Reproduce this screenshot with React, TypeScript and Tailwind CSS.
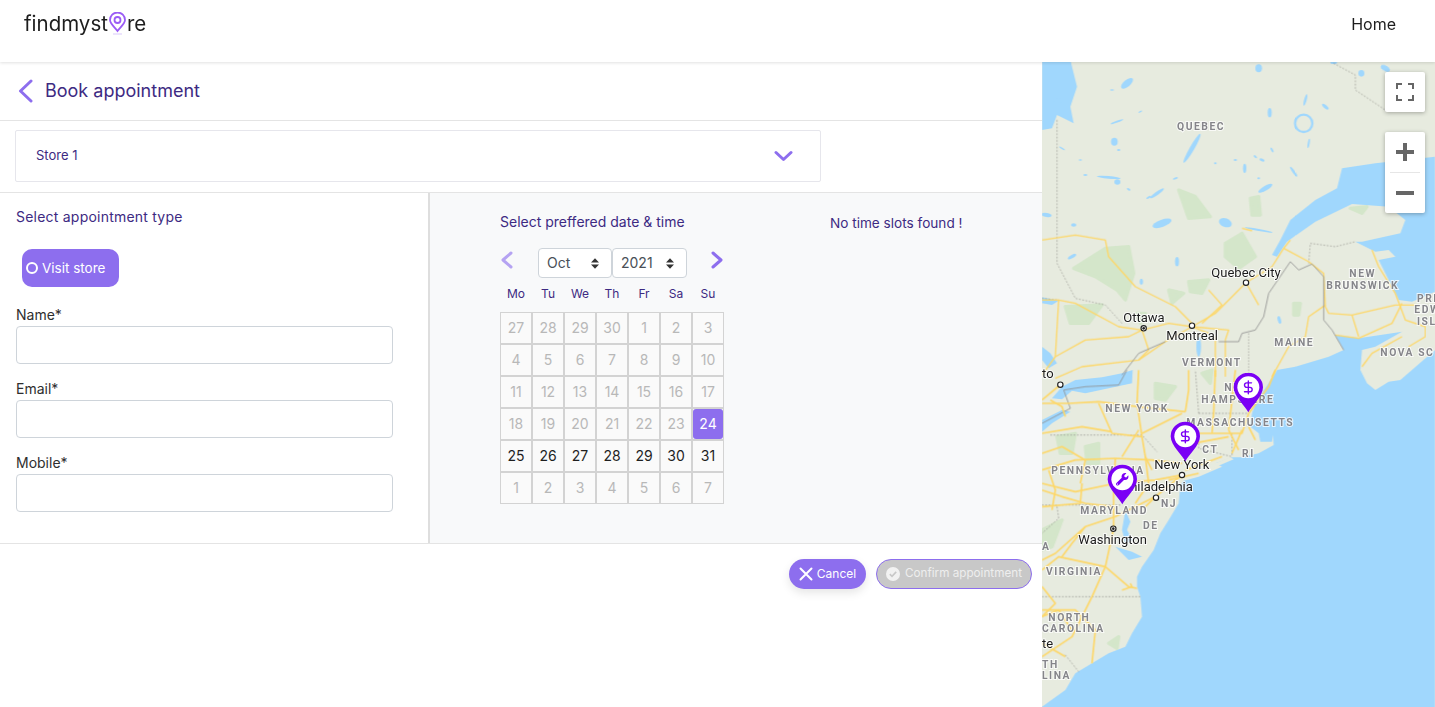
import React from "react";
import { DollarSign } from "lucide-react";
import { FaWrench } from "react-icons/fa";

const WATER = "#a0d7fd";
const LAND = "#e7ebdf";
const ROAD = "#fdd768";

const ocean =
  "M1179,-60 L1075,30 1040,35 1000,60 975,40 955,0 960,-60 1000,-70 1080,-115 950,-95 880,-105 905,-60 860,-40 760,-10 705,0 680,40 660,70 640,100 630,130 625,170 650,190 655,215 690,215 693,195 695,225 650,250 600,262 570,262 520,280 540,290 470,320 425,332 415,345 410,400 380,450 355,490 335,540 300,590 285,620 285,650 295,680 300,740 270,790 250,830 200,850 150,880 100,910 70,960 0,1010 L0,1012 L1179,1012 Z";
const gulf =
  "M1179,290 L1000,310 900,325 885,385 820,420 745,480 715,540 690,585 705,590 735,545 820,485 930,432 1040,440 1090,480 1075,520 960,545 940,545 1000,575 1040,570 1060,590 1010,600 1050,680 1070,720 1110,725 1179,695 Z";
const jamesBay = "M0,0 L85,0 105,80 85,140 95,190 45,165 30,205 0,210 Z";
const lakes: [number, number, number, number, number][] = [
  [450, 265, 50, 7, -60], [255, 70, 22, 10, -40], [650, 25, 10, 12, 0], [550, 488, 20, 13, 20],
  [650, 510, 42, 3, 10], [360, 490, 30, 11, -20], [670, 385, 24, 7, -30], [755, 335, 18, 4, 55],
  [608, 325, 5, 14, 0], [345, 400, 25, 5, -35], [200, 352, 36, 4, 5], [226, 366, 9, 8, 0],
  [217, 245, 10, 12, 0], [683, 158, 6, 14, 0], [850, 140, 12, 5, 40], [660, 300, 8, 4, 20],
  [14, 465, 15, 6, 10], [405, 605, 6, 14, 0], [90, 590, 14, 5, -30], [225, 185, 20, 3, -20],
  [48, 122, 12, 7, 0], [875, 8, 10, 4, 0], [958, 40, 9, 10, 0], [298, 665, 5, 9, 0],
  [712, 780, 5, 12, -15], [1030, 25, 15, 8, 30], [130, 345, 6, 3, 0], [260, 388, 6, 3, 30],
  [580, 300, 5, 3, 0], [295, 155, 6, 2, -30], [640, 290, 6, 3, 40], [230, 270, 5, 3, 0],
  [400, 355, 8, 3, -20], [320, 412, 8, 3, -30], [60, 265, 10, 2, 30], [115, 300, 5, 2, 0],
  [210, 90, 6, 2, 0], [790, 120, 4, 18, 15], [650, 355, 4, 3, 0], [690, 270, 8, 3, 60],
  [800, 250, 3, 14, 10], [520, 310, 4, 3, 0], [95, 495, 8, 5, 0], [470, 860, 7, 30, 0],
];
const greens6 = [
  "M410,390 L460,410 505,470 440,475 Z",
  "M625,415 L650,410 655,465 630,465 Z",
  "M550,550 L600,520 640,590 590,625 550,590 Z",
  "M95,625 L190,565 260,560 275,640 250,720 225,690 160,650 Z",
  "M70,740 L180,735 140,790 85,790 Z",
  "M440,665 L500,660 480,700 445,695 Z",
  "M380,690 L425,700 390,730 Z",
  "M755,730 L775,730 770,765 755,765 Z",
  "M925,445 L975,440 960,460 Z",
  "M285,760 L310,760 295,790 Z",
];
const greens7 = [
  "M340,40 L400,50 370,90 340,85 Z",
  "M45,200 L100,190 90,250 55,250 Z",
  "M130,230 L170,220 170,280 135,280 Z",
  "M480,10 L510,0 505,40 Z",
  "M0,480 L60,450 30,530 0,540 Z",
  "M200,820 L230,800 225,835 Z",
];
const roads6 = [
  "M725,565 L800,605 845,640 850,740 860,760 930,765 1060,735 1120,735",
  "M745,540 L725,565 690,620 612,668 520,760 450,800",
  "M612,668 L650,735",
  "M500,690 L540,735 480,790",
  "M450,800 L560,810 550,840",
  "M300,810 L380,790 450,800 500,820",
  "M300,810 L230,800 100,730 50,720 40,890 0,945",
  "M0,540 L100,525 190,540 200,590 280,680 400,740 450,790",
  "M450,800 L370,845 290,900 120,920 40,955",
  "M690,950 L740,860 790,830 800,770 850,735",
  "M880,825 L950,835 1050,790 1080,730",
  "M930,765 L950,830",
  "M990,570 L1010,620 1060,700 1090,780 1150,800 1150,830 1100,860",
  "M1080,830 L990,880 960,920",
  "M300,810 L320,870 290,900",
  "M0,720 L50,720",
  "M40,890 L130,840 260,830 300,810",
  "M600,505 L630,512",
  "M520,830 L520,950",
  "M550,840 L550,950",
];
const roads7 = [
  "M290,0 L285,100 300,200 310,260 330,300",
  "M0,100 L80,100 170,95 290,110 430,125",
  "M430,125 L440,60 440,0",
  "M300,190 L420,130",
  "M170,100 L210,190 300,200",
  "M0,190 L120,170 210,185",
  "M0,300 L100,270 220,265 330,270 420,280",
  "M420,315 L340,330 220,340 100,365 0,340",
  "M420,315 L340,380 310,410",
  "M340,380 L220,440 130,470 40,550 0,570",
  "M215,475 L190,590 150,680 90,800 0,860",
  "M190,590 L260,650 285,655",
  "M0,600 L50,560 190,590",
  "M0,720 L100,720 160,780 150,880",
  "M520,0 L515,130 510,190",
  "M620,130 L600,190 520,190 440,190",
  "M620,170 L640,210",
  "M600,180 L570,250",
  "M620,130 L680,50 700,0",
  "M120,340 L115,400 0,410",
  "M0,740 L50,720 90,780",
  "M70,860 L0,820",
  "M290,180 L240,260",
  "M430,300 L540,260",
  "M60,40 L0,90",
  "M25,90 L60,110 70,140",
  "M400,230 L560,200",
  "M20,300 L40,360 30,420",
  "M130,270 L115,340",
  "M220,265 L215,340 215,470",
  "M310,260 L320,340 280,400",
  "M0,250 L60,230 130,270",
  "M380,330 L470,310",
  "M560,180 L590,240",
  "M580,0 L570,90 560,180",
  "M0,650 L40,700 0,740",
  "M240,660 L270,650 265,640",
  "M130,470 L90,520 60,560",
  "M0,360 L60,380 130,400 215,410",
];
const labels6: [string, number, number][] = [
  ["QUEBEC", 405, 210],
  ["NEW", 922, 652],
  ["BRUNSWICK", 853, 686],
  ["PRI", 1125, 727],
  ["EDW", 1117, 760],
  ["ISL", 1125, 795],
  ["MAINE", 697, 858],
  ["VERMONT", 420, 917],
  ["NOVA SC", 1015, 888],
];
const cities6: [string, number, number][] = [
  ["Quebec City", 508, 650],
  ["Ottawa", 244, 785],
  ["Montreal", 373, 841],
  ["to", 0, 955],
];
const labels7: [string, number, number][] = [
  ["NEW YORK", 190, 125],
  ["NEW", 547, 63],
  ["HAMPSHIRE", 478, 98],
  ["MASSACHUSETTS", 433, 168],
  ["CT", 481, 248],
  ["RI", 600, 260],
  ["PENNSYLVANIA", 28, 313],
  ["NJ", 357, 412],
  ["MARYLAND", 115, 433],
  ["DE", 303, 478],
  ["A", 0, 540],
  ["VIRGINIA", 12, 615],
  ["NORTH", 19, 753],
  ["CAROLINA", 0, 786],
  ["TH", 0, 895],
  ["LINA", 0, 928],
];
const cities7: [string, number, number][] = [
  ["New York", 337, 297],
  ["Philadelphia", 240, 363],
  ["Washington", 109, 523],
  ["te", 0, 835],
];

function StateLabel({ t, x, y }: { t: string; x: number; y: number }) {
  return (
    <text x={x} y={y} fontSize={31} fontWeight={700} letterSpacing={4.6} fill="#85858a" stroke="#ffffff" strokeOpacity={0.75} strokeWidth={6} paintOrder="stroke" fontFamily="Roboto, sans-serif">
      {t}
    </text>
  );
}
function CityLabel({ t, x, y }: { t: string; x: number; y: number }) {
  return (
    <text x={x} y={y} fontSize={39} fill="#1c1c1c" stroke="#ffffff" strokeOpacity={0.8} strokeWidth={6} paintOrder="stroke" fontFamily="Roboto, sans-serif">
      {t}
    </text>
  );
}
function Dot({ x, y, bull }: { x: number; y: number; bull?: boolean }) {
  return (
    <g>
      <circle cx={x} cy={y} r={8} fill="#fff" stroke="#222" strokeWidth={3.5} />
      {bull && <circle cx={x} cy={y} r={4} fill="#222" />}
    </g>
  );
}
function Pin({ x, y, wrench }: { x: number; y: number; wrench?: boolean }) {
  return (
    <g transform={`translate(${x},${y})`}>
      <path d="M0,75 C-8,58 -44,28 -44,0 A44,44 0 1 1 44,0 C44,28 8,58 0,75 Z" fill="#7a00f5" />
      <circle r={33} fill="#fff" />
      {wrench ? (
        <FaWrench x={-19} y={-19} size={38} color="#7a00f5" />
      ) : (
        <DollarSign x={-23} y={-23} width={46} height={46} color="#7a00f5" strokeWidth={2.2} />
      )}
    </g>
  );
}

function MapArt() {
  return (
    <svg viewBox="0 0 1179 1935" className="absolute inset-0 h-full w-full" preserveAspectRatio="none">
      <defs>
        <filter id="soft" x="-5%" y="-5%" width="110%" height="110%">
          <feGaussianBlur stdDeviation="2" />
        </filter>
      </defs>
      <rect width="1179" height="1935" fill={LAND} />
      <g filter="url(#soft)">
        <g transform="translate(0,-6)">
          {greens6.map((d, i) => (
            <path key={i} d={d} fill="#d4e6ca" stroke="#d4e6ca" strokeWidth="10" strokeLinejoin="round" />
          ))}
          <path d={jamesBay} fill={WATER} />
          <path d="M0,712 L50,722 30,735 0,730 Z M0,860 L25,880 45,910 20,925 0,900 Z" fill={WATER} />
          {lakes.map(([cx, cy, rx, ry, r], i) => (
            <ellipse key={i} cx={cx} cy={cy} rx={rx} ry={ry} transform={`rotate(${r} ${cx} ${cy})`} fill={WATER} />
          ))}
          <circle cx="785" cy="190" r="26" fill="none" stroke={WATER} strokeWidth="7" />
          <path d={gulf} fill={WATER} />
        </g>
        <g transform="translate(0,924)">
          {greens7.map((d, i) => (
            <path key={i} d={d} fill="#d4e6ca" stroke="#d4e6ca" strokeWidth="10" strokeLinejoin="round" />
          ))}
          <path d={ocean} fill={WATER} />
          <path d="M30,85 L60,50 100,30 180,22 240,10 272,0 270,40 200,55 130,70 90,62 60,88 Z" fill={WATER} />
          <path d="M0,185 L30,160 85,125 60,120 0,150 Z" fill={WATER} />
          <path d="M250,420 L265,455 255,480 272,510 250,520 240,480 Z" fill={WATER} />
          <path d="M220,530 L270,545 300,560 260,570 Z" fill={WATER} />
          <path d="M470,300 L565,262 575,268 500,300 Z" fill={LAND} />
        </g>
      </g>
      <g transform="translate(0,-6)">
        <path d="M0,715 L50,720 M45,180 L45,520 45,610 100,715 190,735 240,790" fill="none" stroke="#a3a39c" strokeWidth="2.5" strokeDasharray="5 5" />
        <path d="M875,10 L940,45 940,90 1030,150 M800,610 L805,550 880,560 940,545" fill="none" stroke="#a3a39c" strokeWidth="2.5" strokeDasharray="5 5" />
        <path d="M620,820 L620,960" fill="none" stroke="#a3a39c" strokeWidth="2.5" strokeDasharray="4 5" />
        {roads6.map((d, i) => (
          <path key={i} d={d} fill="none" stroke={ROAD} strokeWidth={4} strokeLinejoin="round" />
        ))}
        <path d="M530,845 L590,845 600,820 640,810 665,770 680,700 745,605 770,630 810,612 845,650 845,780 870,810 905,870" fill="none" stroke="#8f8f8f" strokeWidth="2.5" />
        <path d="M240,945 L290,880 370,845" fill="none" stroke="#8f8f8f" strokeWidth="2.5" />
      </g>
      <g transform="translate(0,924)">
        <path d="M25,195 L300,195 345,245 M0,405 L240,405 M45,410 L50,445 0,490 M0,680 L295,680 M70,855 L110,905 M470,130 L620,130 M470,130 L460,0 M470,190 L470,235 570,260 M570,190 L570,260" fill="none" stroke="#9c9c96" strokeWidth="2.5" strokeDasharray="5 5" />
        <path d="M0,160 L85,115 65,60 130,50 230,45 255,0" fill="none" stroke="#8f8f8f" strokeWidth="2.5" />
        {roads7.map((d, i) => (
          <path key={i} d={d} fill="none" stroke={ROAD} strokeWidth={5} strokeLinejoin="round" />
        ))}
      </g>
      <g transform="translate(0,-6)">
        {labels6.map(([t, x, y]) => (
          <StateLabel key={t} t={t} x={x} y={y} />
        ))}
        {cities6.map(([t, x, y]) => (
          <CityLabel key={t} t={t} x={x} y={y} />
        ))}
        <Dot x={612} y={668} />
        <Dot x={305} y={805} bull />
        <Dot x={450} y={797} />
      </g>
      <g transform="translate(0,924)">
        {labels7.map(([t, x, y]) => (
          <StateLabel key={t + x} t={t} x={x} y={y} />
        ))}
        {cities7.map(([t, x, y]) => (
          <CityLabel key={t} t={t} x={x} y={y} />
        ))}
        <Dot x={55} y={44} />
        <Dot x={420} y={315} />
        <Dot x={342} y={383} />
        <Dot x={214} y={476} bull />
        <Pin x={619} y={52} />
        <Pin x={430} y={199} />
        <Pin x={241} y={328} wrench />
      </g>
    </svg>
  );
}

function MapControls() {
  return (
    <>
      <button className="absolute right-[10px] top-[10px] flex h-10 w-10 items-center justify-center rounded-[2px] bg-white shadow-[0_1px_4px_rgba(0,0,0,0.3)]">
        <svg width="18" height="18" viewBox="0 0 18 18" fill="none" stroke="#666" strokeWidth="2">
          <path d="M1,6 V1 H6 M12,1 H17 V6 M17,12 V17 H12 M6,17 H1 V12" />
        </svg>
      </button>
      <div className="absolute right-[10px] top-[70px] flex w-10 flex-col items-center rounded-[2px] bg-white shadow-[0_1px_4px_rgba(0,0,0,0.3)]">
        <div className="flex h-10 items-center justify-center">
          <svg width="18" height="18" viewBox="0 0 18 18" fill="#666">
            <path d="M7,0 H11 V7 H18 V11 H11 V18 H7 V11 H0 V7 H7 Z" />
          </svg>
        </div>
        <div className="h-px w-[30px] bg-[#e6e6e6]" />
        <div className="flex h-10 items-center justify-center">
          <svg width="18" height="18" viewBox="0 0 18 18" fill="#666">
            <path d="M0,7 H18 V11 H0 Z" />
          </svg>
        </div>
      </div>
    </>
  );
}

const weekDays = ["Mo", "Tu", "We", "Th", "Fr", "Sa", "Su"];
const muted = [27, 28, 29, 30, 1, 2, 3, 4, 5, 6, 7, 8, 9, 10, 11, 12, 13, 14, 15, 16, 17, 18, 19, 20, 21, 22, 23];
const active = [25, 26, 27, 28, 29, 30, 31];
const trailing = [1, 2, 3, 4, 5, 6, 7];

function Cell({ children, kind }: { children: React.ReactNode; kind: "muted" | "active" | "selected" }) {
  if (kind === "selected") {
    return (
      <div className="flex h-8 w-8 items-center justify-center border border-[#d3d3d3] bg-[#fafafa]">
        <div className="flex h-full w-full items-center justify-center rounded-[3px] bg-[#8d6eee] text-white">{children}</div>
      </div>
    );
  }
  return (
    <div className={`flex h-8 w-8 items-center justify-center border border-[#d3d3d3] bg-[#fafafa] ${kind === "muted" ? "text-[#b8b8b8]" : "text-[#1f1f1f]"}`}>
      {children}
    </div>
  );
}

function SelectBox({ value, w }: { value: string; w: string }) {
  return (
    <div className={`flex h-[30px] items-center justify-between rounded-[4px] border border-[#ced4da] bg-white pl-2 pr-[12px] text-sm text-[#495057] ${w}`}>
      <span>{value}</span>
      <svg width="8" height="11" viewBox="0 0 9 12" fill="#333">
        <path d="M4.5,0 L9,5 H0 Z M0,7 H9 L4.5,12 Z" />
      </svg>
    </div>
  );
}

function Field({ label }: { label: string }) {
  return (
    <div className="flex flex-col">
      <label className="h-[20px] text-sm leading-[20px] text-[#2e2e2e]">{label}</label>
      <input className="mt-[1px] h-[38px] w-[377px] rounded-[4px] border border-[#ced4da] bg-white" />
    </div>
  );
}

export default function App() {
  return (
    <div className="flex h-[707px] w-full flex-col overflow-hidden bg-white font-['Inter',sans-serif]">
      <header className="relative z-10 flex h-[62px] shrink-0 items-start justify-between bg-white pl-6 pr-[39px] shadow-[0_1px_3px_rgba(0,0,0,0.12)]">
        <div className="mt-[12px] flex items-center text-[20.5px] leading-6 text-[#1d1d1d]">
          <span>findmyst</span>
          <svg width="19" height="23" viewBox="0 0 19 23" className="-mt-[1px]" fill="none" stroke="#9a5cf5" strokeWidth="1.8">
            <path d="M9.5,19 C6,14.5 2,11.5 2,8 A7.5,7.5 0 1 1 17,8 C17,11.5 13,14.5 9.5,19 Z" />
            <circle cx="9.5" cy="8" r="3" />
            <path d="M5,22 H14" stroke="#d9c9fb" strokeWidth="1" />
          </svg>
          <span>re</span>
        </div>
        <a className="mt-[13px] text-base leading-[22px] text-[#1d1d1d]">Home</a>
      </header>
      <div className="flex min-h-0 flex-1">
        <main className="flex w-[1042px] shrink-0 flex-col">
          <div className="flex h-[59px] shrink-0 items-center gap-[12px] border-b border-[#e4e4e4] pl-[18px]">
            <svg width="15" height="24" viewBox="0 0 15 24" fill="none" stroke="#8d6eee" strokeWidth="3" strokeLinecap="round" strokeLinejoin="round">
              <path d="M13,2 L2.5,12 L13,22" />
            </svg>
            <h1 className="text-lg font-normal text-[#3d2a82]">Book appointment</h1>
          </div>
          <div className="h-[72px] shrink-0 border-b border-[#e4e4e4] pl-[15px] pt-[9px]">
            <div className="flex h-[52px] w-[806px] items-center justify-between rounded-[2px] border border-[#e6e6ec] bg-white pl-5 pr-[27px] text-[13px] text-[#3d2a82]">
              <span>Store 1</span>
              <svg width="19" height="12" viewBox="0 0 19 12" fill="none" stroke="#8d6eee" strokeWidth="3" strokeLinecap="round" strokeLinejoin="round">
                <path d="M2,2.5 L9.5,9.5 L17,2.5" />
              </svg>
            </div>
          </div>
          <div className="flex h-[351px] shrink-0 border-b border-[#e4e4e4]">
            <section className="w-[430px] shrink-0 border-r-2 border-[#dedede] pl-4 pt-[14px]">
              <p className="h-5 text-sm leading-5 tracking-[0.22px] text-[#3d2a82]">Select appointment type</p>
              <button className="ml-[6px] mt-[22px] flex h-[38px] w-[97px] items-center gap-1 rounded-[10px] bg-[#8d6eee] pl-1 text-[13.5px] text-white">
                <span className="h-3 w-3 rounded-full border-2 border-white" />
                Visit store
              </button>
              <div className="mt-[18px] flex flex-col gap-[15px]">
                <Field label="Name*" />
                <Field label="Email*" />
                <Field label="Mobile*" />
              </div>
            </section>
            <section className="flex flex-1 bg-[#f8f9fa] pl-[70px] pt-[19px]">
              <div className="w-[330px] shrink-0">
                <p className="h-5 text-sm leading-5 text-[#3d2a82]">Select preffered date &amp; time</p>
                <div className="mt-[16px] flex w-[224px] items-center">
                  <svg width="14" height="18" viewBox="0 0 14 18" fill="none" stroke="#b5a3f2" strokeWidth="3" strokeLinecap="round" strokeLinejoin="round" className="-mt-[6px]">
                    <path d="M11,2 L3,9 L11,16" />
                  </svg>
                  <div className="ml-[24px] flex">
                    <SelectBox value="Oct" w="w-[74px]" />
                    <SelectBox value="2021" w="w-[75px]" />
                  </div>
                  <svg width="14" height="18" viewBox="0 0 14 18" fill="none" stroke="#8d6eee" strokeWidth="3" strokeLinecap="round" strokeLinejoin="round" className="-mt-[6px] ml-[23px]">
                    <path d="M3,2 L11,9 L3,16" />
                  </svg>
                </div>
                <div className="mt-[6px] grid h-[28px] w-[224px] grid-cols-[repeat(7,32px)] items-center pb-2 text-center text-xs text-[#3d2a82]">
                  {weekDays.map((d) => (
                    <span key={d}>{d}</span>
                  ))}
                </div>
                <div className="grid w-[224px] grid-cols-[repeat(7,32px)] text-sm">
                  {muted.map((d, i) => (
                    <Cell key={i} kind="muted">{d}</Cell>
                  ))}
                  <Cell kind="selected">24</Cell>
                  {active.map((d) => (
                    <Cell key={d} kind="active">{d}</Cell>
                  ))}
                  {trailing.map((d) => (
                    <Cell key={"t" + d} kind="muted">{d}</Cell>
                  ))}
                </div>
              </div>
              <p className="mt-px h-5 text-[13.6px] leading-5 text-[#3d2a82]">No time slots found !</p>
            </section>
          </div>
          <div className="flex justify-end gap-[10px] pr-[10px] pt-[15px]">
            <button className="flex h-[30px] w-[77px] items-center justify-center gap-1 rounded-full bg-[#8d6eee] text-[12px] text-white shadow-[0_4px_10px_rgba(0,0,0,0.1)]">
              <svg width="14" height="14" viewBox="0 0 14 14" stroke="#fff" strokeWidth="2" strokeLinecap="round">
                <path d="M1.5,1.5 L12.5,12.5 M12.5,1.5 L1.5,12.5" />
              </svg>
              Cancel
            </button>
            <button className="flex h-[30px] w-[156px] items-center justify-center gap-[5px] rounded-full border border-[#8d6eee] bg-[#c8c8c8] text-[11.7px] text-[#eeeeee]">
              <svg width="14" height="14" viewBox="0 0 14 14">
                <circle cx="7" cy="7" r="7" fill="#f2f2f2" />
                <path d="M3.8,7.2 L6,9.3 L10.2,4.9" fill="none" stroke="#c8c8c8" strokeWidth="1.6" />
              </svg>
              Confirm appointment
            </button>
          </div>
        </main>
        <aside className="relative flex-1 overflow-hidden">
          <MapArt />
          <MapControls />
        </aside>
      </div>
    </div>
  );
}
